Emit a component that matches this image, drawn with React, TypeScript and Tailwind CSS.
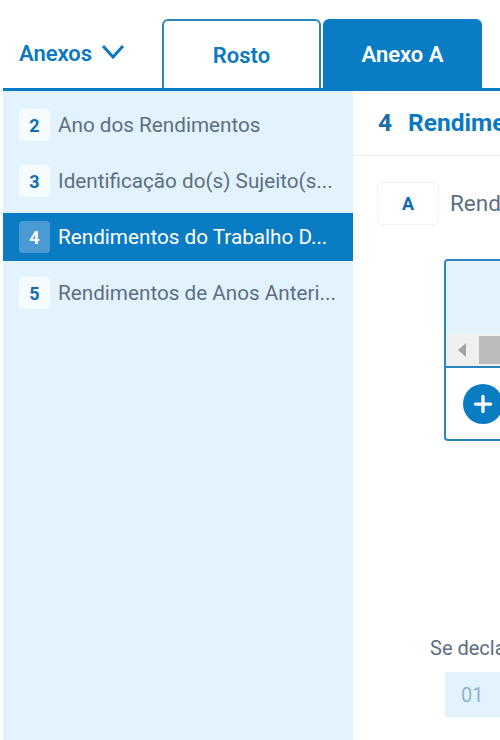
import { Plus } from 'lucide-react';

const sections = [
    { id: 2, title: 'Ano dos Rendimentos' },
    { id: 3, title: 'Identificação do(s) Sujeito(s...' },
    { id: 4, title: 'Rendimentos do Trabalho D...', active: true },
    { id: 5, title: 'Rendimentos de Anos Anteri...' },
];

const Header = () => (
    <header className="flex h-[91px] items-end border-b-[3px] border-[#0a7cc4] pl-[16px]">
        <button className="flex h-[88px] w-[143px] items-start pt-[41px] text-[22px] leading-[26px] font-semibold text-[#0a78c2]">
            Anexos
            <svg className="mt-[3px] ml-[9px]" width="24" height="16" viewBox="0 0 24 16" fill="none" stroke="currentColor" strokeWidth="3">
                <path d="M2 2 L12 13 L22 2" />
            </svg>
        </button>
        <div className="flex items-end gap-[2px]">
            <div className="flex h-[69px] w-[159px] items-center justify-center rounded-t-[6px] border-[2px] border-b-0 border-[#2a85c0] pt-[2px] text-[22px] font-semibold text-[#0a78c2]">
                Rosto
            </div>
            <div className="flex h-[69px] w-[159px] items-center justify-center rounded-t-[6px] bg-[#0a7cc4] pt-[2px] text-[22px] font-semibold text-white">
                Anexo A
            </div>
        </div>
    </header>
);

const Sidebar = () => (
    <aside className="flex w-[350px] shrink-0 flex-col gap-[8px] bg-[#e3f3fd] pt-[10px]">
        {sections.map(section => (
            <div
                key={section.id}
                className={`flex h-[48px] items-center gap-[8px] pl-[16px] text-[20.7px] ${
                    section.active ? 'bg-[#0a7cc4] text-white' : 'text-[#5c6f82]'
                }`}
            >
                <span
                    className={`flex h-[32px] w-[31px] items-center justify-center rounded-[4px] text-[18px] font-bold ${
                        section.active ? 'bg-[#4a9bd4] text-white' : 'bg-[#f5fbff] text-[#0f6cb0]'
                    }`}
                >
                    {section.id}
                </span>
                <span className="pt-[1px] whitespace-nowrap">{section.title}</span>
            </div>
        ))}
    </aside>
);

const Content = () => (
    <main className="flex min-w-0 flex-1 flex-col overflow-hidden">
        <div className="flex h-[65px] shrink-0 items-center gap-[16px] border-b border-[#e6f0f7] pt-[1px] pl-[25px] text-[24.5px] font-bold whitespace-nowrap text-[#0a78c2]">
            <span className="text-[#1c6ea8]">4</span>
            <span>Rendimentos do Trabalho Dependente</span>
        </div>
        <div className="mt-[26px] flex items-center gap-[11px] pl-[24px] whitespace-nowrap">
            <span className="flex h-[43px] w-[62px] shrink-0 items-center justify-center rounded-[4px] border border-[#eef5fa] text-[18px] font-bold text-[#0f6cb0]">
                A
            </span>
            <span className="text-[22.5px] text-[#5c6f82]">Rendimentos</span>
        </div>
        <div className="mt-[34px] ml-[91px] w-[500px] shrink-0 overflow-hidden rounded-[4px] border-[2px] border-[#2a85c0]">
            <div className="h-[72px] bg-[#e3f3fd]" />
            <div className="flex h-[33px] items-center bg-[#f0f0f0]">
                <span className="ml-[12px] h-0 w-0 border-y-[7px] border-r-[8px] border-y-transparent border-r-[#a3a3a3]" />
                <span className="ml-[13px] h-[28px] w-[300px] bg-[#bcbcbc]" />
            </div>
            <div className="flex h-[73px] items-center border-t-[2px] border-[#2a85c0] pl-[17px]">
                <span className="flex h-[40px] w-[40px] items-center justify-center rounded-full bg-[#0a7cc4] text-white">
                    <Plus size={26} strokeWidth={3} />
                </span>
            </div>
        </div>
        <p className="mt-[195px] pl-[77px] text-[20px] leading-[24px] whitespace-nowrap text-[#5c6f82]">
            Se declarar rendimentos
        </p>
        <div className="mt-[12px] ml-[92px] flex h-[45px] w-[100px] shrink-0 items-center bg-[#e3f3fd] pl-[16px] text-[20px] text-[#8db4d2]">
            01
        </div>
    </main>
);

export default function App() {
    return (
        <div className="h-[740px] w-[500px] overflow-hidden bg-white pl-[3px] font-['Roboto',sans-serif]">
            <Header />
            <div className="flex h-[649px]">
                <Sidebar />
                <Content />
            </div>
        </div>
    );
}
